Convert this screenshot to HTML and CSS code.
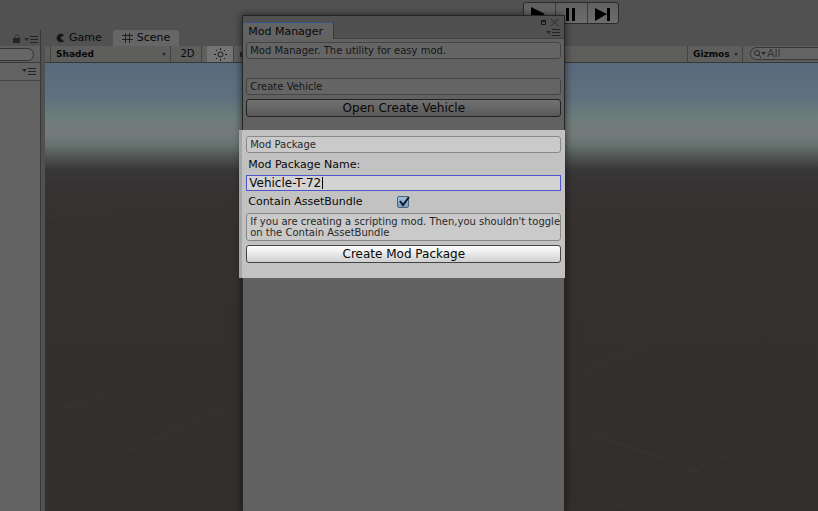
FILE: index.html
```html
<!DOCTYPE html>
<html lang="en">
<head>
<meta charset="utf-8">
<title>Mod Manager</title>
<link rel="stylesheet" href="styles.css">
</head>
<body>
<div class="editor">
  <header class="playbar">
    <div class="transport">
      <button class="play" aria-label="Play"><svg width="31" height="19" viewBox="0 0 31 19"><path d="M7 3l14 7-14 7z"/></svg></button>
      <button class="play" aria-label="Pause"><svg width="31" height="19" viewBox="0 0 31 19"><path d="M10 4h3v13h-3zM16 4h3v13h-3z"/></svg></button>
      <button class="play" aria-label="Step"><svg width="31" height="19" viewBox="0 0 31 19"><path d="M7 4l12 6-12 7zM19 4h3v13h-3z"/></svg></button>
    </div>
  </header>
  <div class="workspace">
    <aside class="side">
      <div class="side-tabs">
        <svg width="28" height="12" viewBox="0 0 28 12"><path d="M1 5h7v5H1z" fill="#252525"/><path d="M3 5V3q2-3 4 0v2" fill="none" stroke="#333" stroke-width="1"/><path d="M12 5h5l-2.500 3z" fill="#292929"/><path d="M18 3.500h8M18 6.500h8M18 9.500h8" stroke="#222"/></svg>
      </div>
      <div class="side-search"><input class="side-input" type="text" aria-label="Search"></div>
      <div class="side-head"><svg width="15" height="9" viewBox="0 0 15 9"><path d="M0 2h5l-2.500 3z" fill="#292929"/><path d="M6 1.500h8M6 4.500h8M6 7.500h8" stroke="#222"/></svg></div>
    </aside>
    <main class="view">
      <nav class="tabs">
        <button class="tab"><svg width="9" height="10" viewBox="0 0 9 10"><path d="M8 2A4.300 4.300 0 1 0 8 8L4 5z" fill="#151515"/></svg>Game</button>
        <button class="tab tab-active"><svg width="12" height="12" viewBox="0 0 12 12"><path d="M3.500 1v10M7.500 1v10M0 3.500h11M0 7.500h11" stroke="#202020"/></svg>Scene</button>
      </nav>
      <div class="tools">
        <button class="tool tool-shade">Shaded<span class="arrow"></span></button>
        <button class="tool tool-2d">2D</button>
        <button class="tool tool-sun" aria-label="Lighting"><svg width="13" height="13" viewBox="0 0 13 13"><circle cx="6.500" cy="6.500" r="2.500" fill="none" stroke="#181818"/><path d="M6.500 0v2M6.500 11v2M0 6.500h2M11 6.500h2M2 2l1 1M10 10l1 1M11 2l-1 1M3 10l-1 1" stroke="#181818"/></svg></button>
        <span class="speaker"></span>
        <button class="tool tool-gizmos">Gizmos<span class="arrow"></span></button>
        <label class="search"><svg width="14" height="10" viewBox="0 0 14 10"><circle cx="4" cy="4" r="2.500" fill="none" stroke="#252525"/><path d="M6 6l2 3" stroke="#252525"/><path d="M8 3h5l-2.500 3z" fill="#252525"/></svg><input type="text" value="All" aria-label="Search scene"></label>
      </div>
      <div class="scene">
        <svg class="lines" viewBox="0 0 773 448" preserveAspectRatio="none"><path d="M3 154L190 127M90 137l17 6M15 347L60 333M92 334l34 33M80 390L190 339M540 308L700 235M570 188l245 36M520 361l140 50M570 445l190-88" fill="none" stroke="#3a3632"/></svg>
      </div>
    </main>
  </div>
</div>

<section class="window">
  <div class="titlebar">
    <h1 class="title">Mod Manager</h1>
    <div class="controls">
      <svg width="22" height="24" viewBox="0 0 22 24"><path d="M3.500 5.500h4v3h-4zM3 4.500h5" fill="none" stroke="#191919"/><path d="M13 3l7 7M20 3l-7 7" stroke="#292929"/><path d="M8 15h5l-2.500 3z" fill="#292929"/><path d="M14 13.500h8M14 16.500h8M14 19.500h8" stroke="#222"/></svg>
    </div>
  </div>
  <div class="group intro">
    <p class="box">Mod Manager. The utility for easy mod.</p>
  </div>
  <div class="group vehicle">
    <p class="box">Create Vehicle</p>
    <button class="action">Open Create Vehicle</button>
  </div>
  <form class="group package">
    <p class="box">Mod Package</p>
    <label class="caption" for="name">Mod Package Name:</label>
    <div class="field"><input id="name" class="name" type="text" value="Vehicle-T-72"><span class="caret"></span></div>
    <div class="row">
      <label for="bundle">Contain AssetBundle</label>
      <span class="check"><input id="bundle" type="checkbox" checked><svg width="14" height="14" viewBox="0 0 14 14"><path d="M3 6l3 4 6-8" fill="none" stroke="#0b1a28" stroke-width="2"/></svg></span>
    </div>
    <p class="box">If you are creating a scripting mod. Then,you shouldn't toggle on the Contain AssetBundle</p>
    <button class="action" type="button">Create Mod Package</button>
  </form>
</section>
</body>
</html>
```
FILE: styles.css
```css
* { box-sizing: border-box; }
body {
  margin: 0;
  height: 100vh;
  overflow: hidden;
  background: #515151;
  color: #080808;
  font: 11px/14px "DejaVu Sans", sans-serif;
}
button, input { font: inherit; color: inherit; margin: 0; padding: 0; border: 0; border-radius: 0; }
h1, p { margin: 0; font-weight: normal; }
svg { display: block; }

.editor { display: flex; flex-direction: column; height: 100%; }
.playbar { height: 30px; padding-top: 2px; }
.transport {
  display: flex;
  width: 96px;
  margin-left: calc(64% - 1px);
  border: 1px solid #2b2b2b;
  border-radius: 3px;
  background: linear-gradient(#606060, #6e6e6e);
}
.play { flex: 1; height: 20px; background: none; }
.play + .play { border-left: 1px solid #3c3c3c; }

.workspace { flex: 1; display: flex; gap: 4px; min-height: 0; }
.side { width: 41px; display: flex; flex-direction: column; background: #626262; border-right: 1px solid #383838; }
.side-tabs { height: 16px; padding: 3px 0 0 12px; background: #515151; }
.side-search { height: 17px; padding: 2px 6px 2px 0; background: #5f5f5f; border-bottom: 1px solid #3b3b3b; }
.side-input { display: block; width: 100%; height: 13px; background: #666; border: 1px solid #333; border-left: 0; border-radius: 0 7px 7px 0; }
.side-head { height: 18px; padding: 4px 0 0 22px; border-bottom: 1px solid #424242; }

.view { flex: 1; display: flex; flex-direction: column; min-width: 0; }
.tabs { display: flex; height: 16px; }
.tab { display: flex; align-items: center; gap: 4px; padding: 0 11px; background: none; font-size: 11px; }
.tab-active { padding: 0 9px; gap: 3px; background: #666; border-radius: 3px 3px 0 0; }
.tools { display: flex; height: 17px; padding-left: 5px; background: #5e5e5c; border-bottom: 1px solid #383838; }
.tool { display: flex; align-items: center; height: 16px; background: none; border: solid #434343; border-width: 0 1px 0 0; }
.tool-shade { width: 121px; padding: 0 4px 0 5px; justify-content: space-between; border-left-width: 1px; font: bold 9px/14px "DejaVu Sans", sans-serif; }
.tool-2d { width: 31px; padding-left: 3px; justify-content: center; font-size: 10px; }
.tool-sun { width: 27px; margin-left: 5px; justify-content: center; background: #747474; }
.arrow { border: 2px solid transparent; border-top: 3px solid #292929; border-bottom: 0; }
.speaker { width: 5px; height: 5px; margin: 6px; background: #292929; }
.tool-gizmos { width: 56px; margin-left: auto; padding: 0 4px 0 5px; justify-content: space-between; border-left-width: 1px; font: bold 9px/14px "DejaVu Sans", sans-serif; }
.search { display: flex; align-items: center; width: 68px; height: 13px; margin: 1px 0 0 7px; padding-left: 2px; border: 1px solid #383838; border-right: 0; border-radius: 7px 0 0 7px; background: #646464; }
.search input { width: 45px; height: 11px; background: none; color: #343434; }
.scene {
  flex: 1;
  min-height: 0;
  background: linear-gradient(#586b7c 0, #5f717e 35px, #6c7d7b 54px, #757b7a 70px, #667270 82px, #505453 94px, #383738 107px, #373334 122px, #35312e 160px, #332f2c 100%);
}
.lines { width: 100%; height: 100%; }

.window {
  position: absolute;
  inset: 15px calc(31% - 1px) 0 calc(29% + 5px);
  display: flex;
  flex-direction: column;
  border: solid #252525;
  border-width: 1px 1px 0;
  background: #616161;
  box-shadow: 0 0 8px #0009;
}
.titlebar { display: flex; justify-content: space-between; height: 23px; padding-top: 6px; background: #505050; border-bottom: 1px solid #414141; }
.title { height: 17px; padding: 0 10px 0 5px; border-top: 1px solid #35568d; border-right: 1px solid #3a3a3a; background: #636363; font-size: 11px; line-height: 17px; }
.controls { margin: -6px 4px 0 0; }
.group { padding: 0 3px; }
.intro { padding-top: 3px; height: 39px; }
.vehicle { height: 52px; }
.package { margin: 0 -1px; padding: 6px 4px 0; height: 148px; background: #c2c2c2; box-shadow: -3px 0 #a4a7a7; color: #080808; }
.box { padding: 2px 0 2px 3px; border: 1px solid #454545; border-radius: 3px; background: #656565; color: #151515; font-size: 10px; line-height: 11px; }
.package .box { border-color: #888; background: #cacaca; color: #292929; }
.action { display: block; width: 100%; height: 18px; margin-top: 4px; border: 1px solid #222; border-radius: 3px; background: linear-gradient(#717171, #595959); font-size: 12px; line-height: 14px; }
.package .action { border-color: #444; background: linear-gradient(#fff, #d0d0d0); }
.caption { display: block; padding: 5px 2px 3px; }
.field { display: flex; align-items: center; position: relative; height: 16px; border: 1px solid #4d57cb; background: #d3d3d3; }
.name { width: 100%; height: 14px; padding: 0 2px; background: none; outline: 0; font-size: 12px; }
.caret { position: absolute; left: 75px; top: 1px; width: 1px; height: 12px; background: #000; }
.row { display: flex; align-items: center; height: 22px; padding-left: 2px; }
.row label { width: 149px; }
.check { position: relative; width: 14px; height: 14px; }
.check input { display: block; appearance: none; width: 12px; height: 12px; margin-top: 1px; border: 1px solid #48657b; border-radius: 2px; background: linear-gradient(#9fbdd7, #7d9fbe); }
.check svg { position: absolute; inset: 0; pointer-events: none; }
```
